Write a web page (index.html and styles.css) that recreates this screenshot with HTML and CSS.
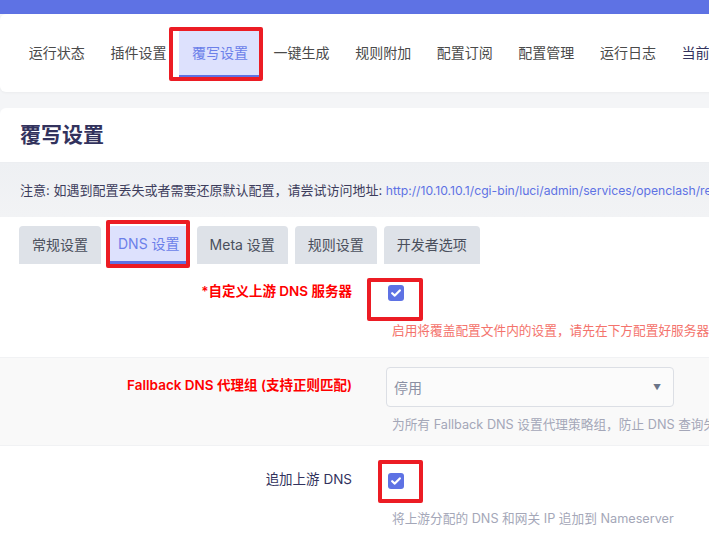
FILE: index.html
```html
<!DOCTYPE html>
<html>
<head>
  <meta charset="utf-8">
  <meta name="viewport" content="width=device-width, initial-scale=1.0">
  <title>覆写设置 - OpenClash</title>
  <link rel="stylesheet" href="styles.css">
</head>
<body>
  <div class="topbar"></div>

  <nav class="menu-card">
    <ul class="menu">
      <li><a href="#">运行状态</a></li>
      <li><a href="#">插件设置</a></li>
      <li class="active"><a href="#">覆写设置</a></li>
      <li><a href="#">一键生成</a></li>
      <li><a href="#">规则附加</a></li>
      <li><a href="#">配置订阅</a></li>
      <li><a href="#">配置管理</a></li>
      <li><a href="#">运行日志</a></li>
      <li class="dark"><a href="#">当前配置</a></li>
    </ul>
  </nav>

  <h2 class="title-card">覆写设置</h2>

  <div class="notice">注意: 如遇到配置丢失或者需要还原默认配置，请尝试访问地址: <a href="#">http://10.10.10.1/cgi-bin/luci/admin/services/openclash/restore</a></div>

  <div class="panel">
    <ul class="tabs">
      <li>常规设置</li>
      <li class="active">DNS 设置</li>
      <li>Meta 设置</li>
      <li>规则设置</li>
      <li>开发者选项</li>
    </ul>

    <div class="row row-1">
      <label class="label required">*自定义上游 DNS 服务器</label>
      <div class="field">
        <div class="control"><span class="checkbox"><svg width="10" height="8" viewBox="0 0 10 8"><path d="M1.2 4.2 L3.8 6.6 L8.8 1.4" fill="none" stroke="#fff" stroke-width="2.2" stroke-linecap="round" stroke-linejoin="round"/></svg></span></div>
        <div class="desc warn">启用将覆盖配置文件内的设置，请先在下方配置好服务器</div>
      </div>
    </div>

    <div class="row row-2 alt">
      <label class="label required">Fallback DNS 代理组 (支持正则匹配)</label>
      <div class="field">
        <div class="control">
          <div class="select"><span>停用</span><span class="arrow">▼</span></div>
        </div>
        <div class="desc">为所有 Fallback DNS 设置代理策略组，防止 DNS 查询失败</div>
      </div>
    </div>

    <div class="row row-3">
      <label class="label">追加上游 DNS</label>
      <div class="field">
        <div class="control"><span class="checkbox"><svg width="10" height="8" viewBox="0 0 10 8"><path d="M1.2 4.2 L3.8 6.6 L8.8 1.4" fill="none" stroke="#fff" stroke-width="2.2" stroke-linecap="round" stroke-linejoin="round"/></svg></span></div>
        <div class="desc">将上游分配的 DNS 和网关 IP 追加到 Nameserver</div>
      </div>
    </div>
  </div>

  <!-- red marks drawn over the screenshot -->
  <div class="mark mark-menu"></div>
  <div class="mark mark-tab"></div>
  <div class="mark mark-check1"></div>
  <div class="mark mark-check2"></div>
</body>
</html>
```

FILE: styles.css
```css
body { font-family: Inter, "Noto Sans CJK SC", sans-serif; margin: 0; padding: 0; background: #f4f5f7; color: #32325d; overflow: hidden; width: 709px; height: 544px; }
a { text-decoration: none; }

.topbar { height: 14px; background: #5e72e4; }

.menu-card { background: #fff; border-radius: 6px; margin-right: -40px; height: 78px; padding: 17px 0 0 16px; box-sizing: border-box; box-shadow: 0 1px 3px rgba(0,0,0,0.04); }
.menu { display: flex; list-style: none; margin: 0; padding: 0; white-space: nowrap; }
.menu li { height: 46px; box-sizing: border-box; padding: 0 12.8px; line-height: 44px; font-size: 14px; }
.menu a { color: #4a4a4a; }
.menu li.active { background: #dde1fd; border-bottom: 2px solid #5e72e4; }
.menu li.active a { color: #6b7fe9; }
.menu li.dark a { color: #32325d; }

.title-card { margin: 16px -40px 0 0; height: 54px; line-height: 54px; padding-left: 20px; background: #fff; border-radius: 6px 6px 0 0; font-size: 21px; font-weight: 700; color: #32325d; }

.notice { height: 54px; line-height: 54px; padding: 0 20px; font-size: 13px; color: #3d3d5c; white-space: nowrap; overflow: hidden; background: linear-gradient(#eef0f3, #f2f3f5); border-top: 1px solid #eceef1; }
.notice a { color: #5e72e4; font-size: 12.2px; }

.panel { background: #fff; padding-top: 9px; margin-right: -40px; }
.tabs { display: flex; gap: 7px; list-style: none; margin: 0; padding: 0 0 0 19px; white-space: nowrap; }
.tabs li { height: 38px; line-height: 38px; padding: 0 13px; box-sizing: border-box; background: #dee2e8; border-radius: 4px 4px 0 0; font-size: 14px; color: #4a4f5c; }
.tabs li.active { background: #dde1fd; color: #6b7fe9; border-bottom: 3px solid #5e72e4; padding: 0 10px; line-height: 36px; }

.row { display: flex; box-sizing: border-box; border-top: 1px solid #f1f2f4; }
.row-1 { height: 93px; padding-top: 9px; border-top: none; }
.row-2 { height: 88px; padding-top: 9px; }
.row-3 { height: 110px; padding-top: 15px; }
.row.alt { background: #f9f9f9; }
.label { width: 352px; flex: none; text-align: right; height: 36px; line-height: 36px; font-size: 13.5px; color: #32325d; }
.label.required { color: #ff0000; font-weight: 600; }
.field { padding-left: 34px; white-space: nowrap; }
.control { height: 40px; display: flex; align-items: center; }
.checkbox { width: 16px; height: 16px; margin-left: 2px; border-radius: 3px; background: #5e72e4; display: flex; align-items: center; justify-content: center; }
.select { width: 288px; height: 40px; box-sizing: border-box; border: 1px solid #dcdfe5; border-radius: 4px; background: #fbfbfb; display: flex; align-items: center; justify-content: space-between; padding: 0 12px 0 7px; font-size: 14px; color: #8a8fa3; }
.arrow { font-size: 8px; color: #6b7589; }
.desc { margin-top: 8px; padding-left: 6px; line-height: 20px; font-size: 12.7px; color: #a4a7b8; }
.desc.warn { color: #f4736c; }

.mark { position: absolute; border: 4px solid #ec1c24; border-radius: 2px; box-sizing: border-box; }
.mark-menu { left: 169px; top: 27px; width: 94px; height: 54px; }
.mark-tab { left: 106px; top: 220px; width: 84px; height: 48px; }
.mark-check1 { left: 367px; top: 278px; width: 56px; height: 43px; }
.mark-check2 { left: 378px; top: 460px; width: 45px; height: 43px; }
```
